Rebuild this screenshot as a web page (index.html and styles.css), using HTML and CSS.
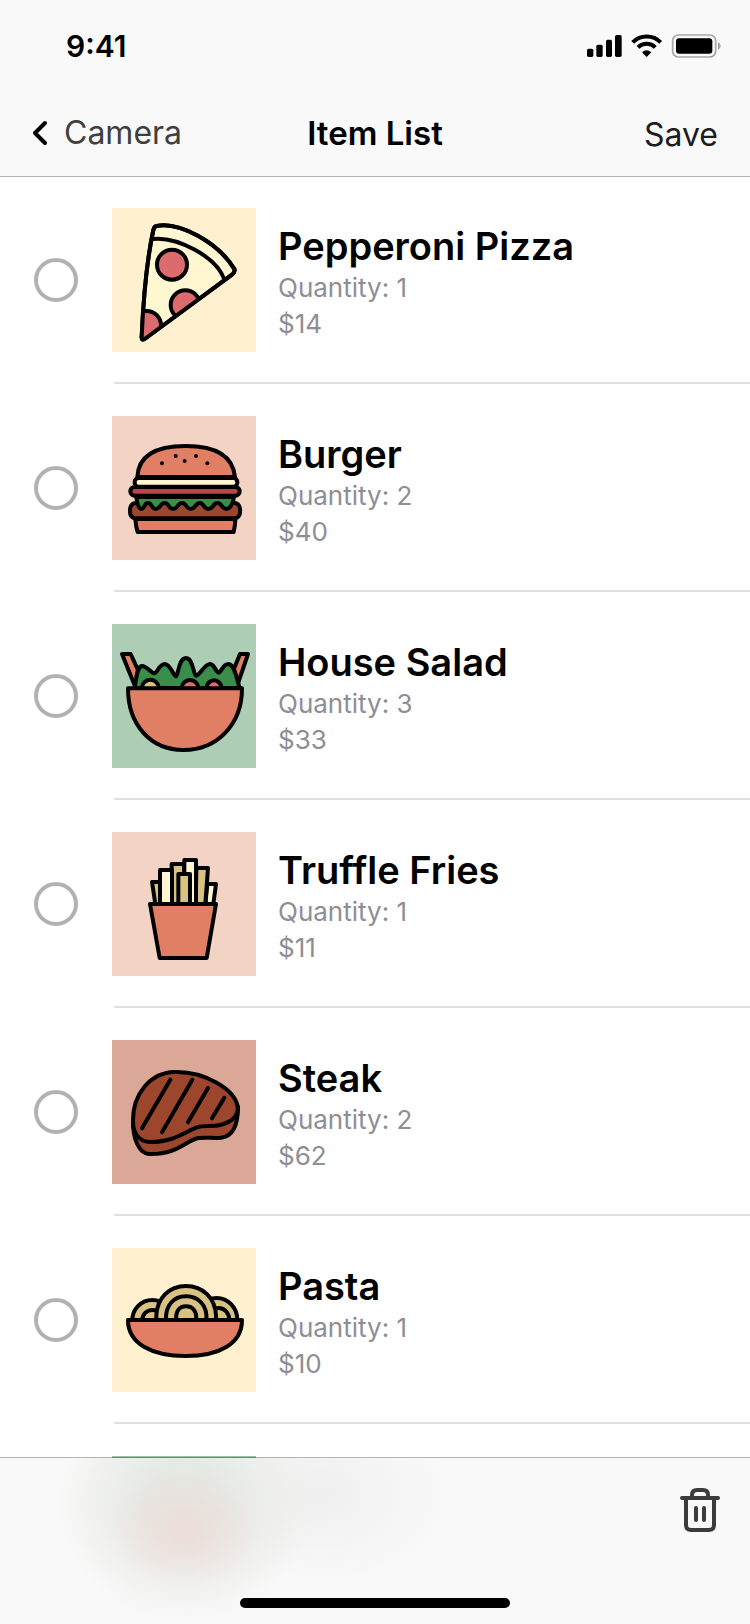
FILE: index.html
```html
<!DOCTYPE html>
<html lang="en">
<head>
<meta charset="utf-8">
<meta name="viewport" content="width=device-width, initial-scale=1">
<title>Item List</title>
<link rel="stylesheet" href="styles.css">
</head>
<body>
<div class="app">
  <header class="header">
    <div class="status">
      <time class="clock">9:41</time>
      <svg class="indicators" viewBox="0 0 402 72" aria-hidden="true">
        <rect x="0" y="44" width="19" height="25" rx="5"/>
        <rect x="28" y="32" width="19" height="37" rx="5"/>
        <rect x="57" y="17" width="18" height="52" rx="5"/>
        <rect x="84" y="3" width="20" height="66" rx="5"/>
        <g fill="none" stroke="#000" stroke-width="12">
          <path d="M137 25A59 59 0 0 1 221 25"/>
          <path d="M153 40A37 37 0 0 1 205 40"/>
        </g>
        <path d="M165 55Q179 43 193 55L179 69Z"/>
        <rect x="257" y="3" width="129" height="66" rx="17" fill="none" stroke="#a6a6a6" stroke-width="5"/>
        <rect x="267" y="13" width="109" height="46" rx="9"/>
        <path d="M393 24Q401 28 401 36T393 48Z" fill="#a6a6a6"/>
      </svg>
    </div>
    <nav class="nav">
      <a class="back" href="#camera">
        <svg class="chevron" viewBox="0 0 16 26" aria-hidden="true"><path d="M13 3L3 13L13 23"/></svg>
        Camera
      </a>
      <h1 class="title">Item List</h1>
      <button class="save" type="button">Save</button>
    </nav>
  </header>

  <ul class="list">
    <li class="item">
      <input class="check" type="checkbox" id="pizza">
      <svg class="thumb cream" viewBox="36 36 432 432" aria-hidden="true">
        <clipPath id="slice"><path d="M170 90C235 76 353 137 403 219Q406 228 397 235L134 429Q124 434 125 423C130 308 142 185 160 102Q163 91 170 90Z"/></clipPath>
        <path class="butter" d="M170 90C235 76 353 137 403 219Q406 228 397 235L134 429Q124 434 125 423C130 308 142 185 160 102Q163 91 170 90Z"/>
        <g clip-path="url(#slice)">
          <path fill="none" d="M159 129C228 121 350 181 373 251"/>
          <circle class="rose" cx="216" cy="206" r="45"/>
          <circle class="rose" cx="256" cy="327" r="44"/>
          <circle class="rose" cx="140" cy="388" r="43"/>
        </g>
        <path fill="none" d="M170 90C235 76 353 137 403 219Q406 228 397 235L134 429Q124 434 125 423C130 308 142 185 160 102Q163 91 170 90Z"/>
      </svg>
      <label class="info" for="pizza"><span class="name">Pepperoni Pizza</span><span>Quantity: 1</span><span>$14</span></label>
    </li>

    <li class="item">
      <input class="check" type="checkbox" id="burger">
      <svg class="thumb peach" viewBox="36 36 432 432" aria-hidden="true">
        <path class="coral" d="M106 345H406C406 360 403 374 401 384H113C109 372 107 358 106 345Z"/>
        <path class="brown" d="M107 297H405C423 300 421 322 419 331Q415 343 402 343H108Q95 343 91 331C89 318 88 299 107 297Z"/>
        <path class="green" d="M109 279H402C399 296 393 314 379 315C365 315 366 296 352 297C338 297 341 315 325 315C310 315 313 296 299 297C285 297 287 315 272 315C258 315 260 297 246 297C232 297 234 315 219 315C205 315 208 297 194 297C180 297 181 315 167 315C153 315 157 297 144 297C132 297 134 315 124 315Q113 313 109 279Z"/>
        <rect class="berry" x="91" y="249" width="328" height="26" rx="13"/>
        <rect class="butter" x="104" y="222" width="308" height="26" rx="12"/>
        <path class="coral" d="M112 219C115 157 165 126 257 126S399 157 405 219Z"/>
        <g class="dots"><circle cx="186" cy="178" r="6"/><circle cx="227" cy="156" r="6"/><circle cx="254" cy="171" r="6"/><circle cx="288" cy="156" r="6"/><circle cx="322" cy="178" r="6"/></g>
      </svg>
      <label class="info" for="burger"><span class="name">Burger</span><span>Quantity: 2</span><span>$40</span></label>
    </li>

    <li class="item">
      <input class="check" type="checkbox" id="salad">
      <svg class="thumb mint" viewBox="36 36 432 432" aria-hidden="true">
        <path class="coral" d="M66 126H92L124 196L106 225Z"/>
        <path class="coral" d="M444 126H420L394 190L412 220Z"/>
        <path class="green" d="M104 228C110 192 111 164 126 162C141 162 153 183 163 184C173 183 177 156 194 156C212 157 219 190 228 193C237 182 236 139 258 138C279 139 279 184 288 191C300 190 313 156 331 156C344 157 347 182 357 182C365 177 371 154 386 156C405 159 410 201 419 228Z"/>
        <circle class="wheat" cx="151" cy="228" r="25"/>
        <circle class="rose" cx="270" cy="229" r="25"/>
        <circle class="rose" cx="342" cy="227" r="22"/>
        <path class="coral" d="M84 229H426C426 337 352 414 251 414S84 337 84 229Z"/>
      </svg>
      <label class="info" for="salad"><span class="name">House Salad</span><span>Quantity: 3</span><span>$33</span></label>
    </li>

    <li class="item">
      <input class="check" type="checkbox" id="fries">
      <svg class="thumb peach" viewBox="36 36 432 432" aria-hidden="true">
        <path class="wheat" d="M156 186H185V252H166Z"/>
        <path class="wheat" d="M215 132H253V252H215Z"/>
        <path class="butter" d="M180 150H216V252H180Z"/>
        <path class="butter" d="M322 192H348L340 252H316Z"/>
        <path class="wheat" d="M289 144H324L316 252H287Z"/>
        <path class="butter" d="M253 120H288V252H253Z"/>
        <path class="wheat" d="M235 162H270V252H235Z"/>
        <path class="coral" d="M150 252H348L320 414H179Z"/>
      </svg>
      <label class="info" for="fries"><span class="name">Truffle Fries</span><span>Quantity: 1</span><span>$11</span></label>
    </li>

    <li class="item">
      <input class="check" type="checkbox" id="steak">
      <svg class="thumb clay" viewBox="36 36 432 432" aria-hidden="true">
        <path class="brown" d="M99 278C98 335 119 378 148 378C235 380 259 335 297 330C317 328 345 331 363 329C397 325 414 293 414 236Z"/>
        <path class="brown" d="M99 278C98 199 150 134 223 132C313 129 405 184 413 236C416 265 393 283 360 291C337 296 309 292 294 297C263 306 227 342 151 342C116 342 99 314 99 278Z"/>
        <path fill="none" d="M211 155L126 301M277 155L186 313M324 180L264 283M373 209L336 271"/>
      </svg>
      <label class="info" for="steak"><span class="name">Steak</span><span>Quantity: 2</span><span>$62</span></label>
    </li>

    <li class="item">
      <input class="check" type="checkbox" id="pasta">
      <svg class="thumb cream" viewBox="36 36 432 432" aria-hidden="true">
        <path class="wheat" d="M97 252A60 60 0 0 1 217 252ZM127 252A30 30 0 0 1 187 252Z"/>
        <path class="wheat" d="M288 252A62 66 0 0 1 412 252ZM324 252A32 36 0 0 1 388 252Z"/>
        <path class="wheat" d="M169 252V238C172 186 207 150 258 150S345 186 348 238V252ZM198 252C196 209 220 181 258 181S323 209 319 252ZM229 252C226 226 238 211 258 211S292 226 288 252Z"/>
        <path class="coral" d="M84 252H426C426 324 357 360 257 360S84 324 84 252Z"/>
      </svg>
      <label class="info" for="pasta"><span class="name">Pasta</span><span>Quantity: 1</span><span>$10</span></label>
    </li>

    <li class="item" aria-hidden="true">
      <span class="check-gap"></span>
      <span class="thumb sage"></span>
    </li>
  </ul>

  <footer class="toolbar">
    <button class="delete" type="button" aria-label="Delete">
      <svg class="trash" viewBox="0 0 40 44" aria-hidden="true">
        <path d="M2 10H38M12 10V7Q12 2 17 2H23Q28 2 28 7V10M6 10V37Q6 42 11 42H29Q34 42 34 37V10M16 20V32M24 20V32"/>
      </svg>
    </button>
    <div class="home"></div>
  </footer>
</div>
</body>
</html>
```
FILE: styles.css
```css
* {
  box-sizing: border-box;
}

body {
  margin: 0;
  background: #fff;
  color: #000;
  font-family: Inter, "Liberation Sans", sans-serif;
}

.app {
  position: relative;
  display: flex;
  flex-direction: column;
  height: 100vh;
  overflow: hidden;
}

.header {
  flex: none;
  z-index: 1;
  background: #f9f9f9;
  box-shadow: 0 1px 0 #b2b2b2;
}

.status {
  display: flex;
  align-items: center;
  justify-content: space-between;
  height: 88px;
  padding: 4px 29px 0 66px;
}

.clock {
  font-size: 30px;
  font-weight: 600;
}

.indicators {
  width: 134px;
  height: 24px;
}

.nav {
  display: grid;
  grid-template-columns: 1fr auto 1fr;
  align-items: center;
  height: 88px;
  padding: 1px 32px 0;
  font-size: 32px;
  line-height: 44px;
}

.back {
  display: flex;
  align-items: center;
  gap: 16px;
  color: #3f3f3f;
  text-decoration: none;
}

.chevron {
  width: 16px;
  height: 26px;
  fill: none;
  stroke: #000;
  stroke-width: 4;
  stroke-linecap: round;
  stroke-linejoin: round;
}

.title {
  margin: 0;
  font-size: 33px;
  font-weight: 600;
}

.save {
  justify-self: end;
  padding: 4px 0 0;
  border: 0;
  background: none;
  color: #1c1c1c;
  font: inherit;
}

.list {
  flex: 1;
  min-height: 0;
  margin: 0;
  padding: 0;
  overflow-y: auto;
  scrollbar-width: none;
  list-style: none;
}

.item {
  position: relative;
  display: flex;
  align-items: center;
  height: 208px;
  padding: 0 34px;
}

.item::after {
  content: "";
  position: absolute;
  right: 0;
  bottom: 0;
  left: 114px;
  height: 2px;
  background: #e0e0e0;
}

.check {
  appearance: none;
  flex: none;
  width: 44px;
  height: 44px;
  margin: 0 34px 0 0;
  border: 4px solid #b2b2b2;
  border-radius: 50%;
}

.check:checked {
  background: #b2b2b2;
}

.check-gap {
  flex: none;
  width: 78px;
}

.thumb {
  flex: none;
  width: 144px;
  height: 144px;
  margin-right: 22px;
  stroke: #000;
  stroke-width: 12;
  stroke-linecap: round;
  stroke-linejoin: round;
}

.cream { background: #fff0cf; }
.peach { background: #f2d3c4; }
.mint { background: #aecdb5; }
.clay { background: #dba898; }
.sage { background: #9bc3a5; }

.butter { fill: #fff7d1; }
.rose { fill: #db6b6d; }
.coral { fill: #e07f64; }
.brown { fill: #9b462d; }
.green { fill: #388e4a; }
.berry { fill: #b8444c; }
.wheat { fill: #d8c283; }

.dots {
  fill: #000;
  stroke: none;
}

.info {
  display: flex;
  flex-direction: column;
  padding-top: 4px;
  color: #8e8e93;
  font-size: 26px;
  line-height: 36px;
}

.name {
  color: #000;
  font-size: 38px;
  font-weight: 600;
  line-height: 48px;
}

.toolbar {
  position: absolute;
  right: 0;
  bottom: 0;
  left: 0;
  display: flex;
  flex-direction: column;
  align-items: center;
  justify-content: space-between;
  height: 167px;
  padding: 30px 30px 16px;
  border-top: 1px solid rgba(0, 0, 0, 0.3);
  background:
    radial-gradient(ellipse 80px 60px at 185px 74px, rgba(239, 217, 214, 0.7), rgba(239, 220, 216, 0)),
    radial-gradient(ellipse 130px 120px at 185px 45px, #e4e6e1 0%, #e6e8e3 30%, rgba(234, 236, 232, 0.75) 60%, rgba(244, 245, 244, 0) 100%),
    radial-gradient(ellipse 130px 90px at 320px 36px, #efefef, rgba(245, 245, 245, 0)),
    #f9f9f9;
  background-clip: padding-box;
}

.delete {
  align-self: flex-end;
  padding: 0;
  border: 0;
  background: none;
}

.trash {
  display: block;
  width: 40px;
  height: 44px;
  fill: none;
  stroke: #3c3c3c;
  stroke-width: 4;
  stroke-linecap: round;
}

.home {
  width: 39%;
  height: 10px;
  border-radius: 5px;
  background: #000;
}
```
